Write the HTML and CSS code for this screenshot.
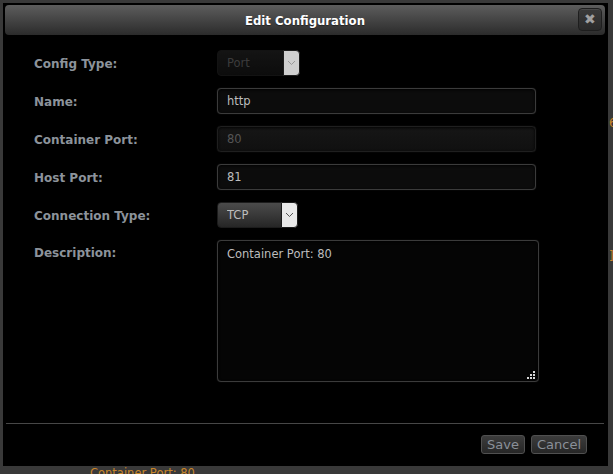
FILE: index.html
```html
<!DOCTYPE html>
<html>
	<head>
		<title>Edit Configuration</title>
		<link rel="stylesheet" href="styles.css">
	</head>
	<body>
		<section class="backdrop">
			<div class="bgEdge bgEdgeTop">6</div>
			<div class="bgEdge bgEdgeMid">]</div>
			<div class="bgLine">Container Port: 80</div>
		</section>

		<section class="modal">
			<header class="titleBar">
				<h2>Edit Configuration</h2>
				<button class="closeButton" type="button">&#10006;</button>
			</header>

			<form class="configForm">
				<label for="configType">Config Type:</label>
				<div class="selectBox disabled narrowA">
					<select id="configType" disabled>
						<option>Port</option>
					</select>
					<span class="arrow"><svg width="9" height="6" viewBox="0 0 9 6"><path d="M1 1 L4.5 4.5 L8 1" fill="none" stroke="currentColor" stroke-width="1"/></svg></span>
				</div>

				<label for="configName">Name:</label>
				<input type="text" id="configName" class="field" value="http" autofocus>

				<label for="containerPort">Container Port:</label>
				<input type="text" id="containerPort" class="field" value="80" disabled>

				<label for="hostPort">Host Port:</label>
				<input type="text" id="hostPort" class="field" value="81">

				<label for="connectionType">Connection Type:</label>
				<div class="selectBox narrowB">
					<select id="connectionType">
						<option>TCP</option>
						<option>UDP</option>
					</select>
					<span class="arrow"><svg width="9" height="6" viewBox="0 0 9 6"><path d="M1 1 L4.5 4.5 L8 1" fill="none" stroke="currentColor" stroke-width="1"/></svg></span>
				</div>

				<label for="description" class="topLabel">Description:</label>
				<div class="areaWrap">
					<textarea id="description">Container Port: 80</textarea>
					<svg class="grip" width="8" height="8" viewBox="0 0 8 8">
						<rect x="6" y="0" width="2" height="2"/>
						<rect x="3" y="3" width="2" height="2"/>
						<rect x="6" y="3" width="2" height="2"/>
						<rect x="0" y="6" width="2" height="2"/>
						<rect x="3" y="6" width="2" height="2"/>
						<rect x="6" y="6" width="2" height="2"/>
					</svg>
				</div>
			</form>

			<footer class="actions">
				<button type="button" class="smallButton">Save</button>
				<button type="button" class="smallButton">Cancel</button>
			</footer>
		</section>
	</body>
</html>
```

FILE: styles.css
```css
html, body {
	height: 100%;
}

body {
	margin: 0px;
	padding: 0px;
	background-color: #393939;
	font-family: "DejaVu Sans", Verdana, sans-serif;
	overflow: hidden;
}

.backdrop {
	display: flex;
	flex-direction: column;
	color: #c8862a;
	font-size: 11.5px;
}

.bgEdge {
	padding-left: 609px;
	line-height: 12px;
}

.bgEdgeTop {
	padding-top: 117px;
}

.bgEdgeMid {
	padding-top: 121px;
}

.bgLine {
	padding-top: 205px;
	padding-left: 90px;
	line-height: 12px;
}

.modal {
	position: absolute;
	left: 3px;
	top: 3px;
	width: 605px;
	height: 463px;
	box-sizing: border-box;
	padding: 2px 2px 2px 2px;
	background-color: #000;
	display: flex;
	flex-direction: column;
}

.titleBar {
	position: relative;
	height: 30px;
	margin-right: 1px;
	border-radius: 4px;
	background: linear-gradient(#5d5d5d, #2b2b2b);
	display: flex;
	align-items: center;
	justify-content: center;
	flex-shrink: 0;
}

.titleBar h2 {
	margin: 0px;
	color: #fff;
	font-family: "DejaVu Sans Condensed", "DejaVu Sans", sans-serif;
	font-weight: bold;
	font-size: 13px;
	text-shadow: 0 1px 1px rgba(0,0,0,0.4);
}

.closeButton {
	position: absolute;
	right: 3px;
	top: 3px;
	width: 24px;
	height: 23px;
	padding: 0px;
	border: 1px solid #1e1e1e;
	border-radius: 4px;
	background: linear-gradient(#3a3a3a, #2a2a2a);
	box-shadow: inset 0 1px 0 rgba(255,255,255,0.08);
	color: #a0a0a0;
	font-size: 14px;
	line-height: 21px;
	text-align: center;
}

.configForm {
	flex: 1;
	display: grid;
	grid-template-columns: 183px auto;
	grid-auto-rows: 26px;
	row-gap: 12px;
	align-items: center;
	justify-items: start;
	padding: 15px 0px 0px 29px;
	margin: 0px;
}

.configForm label {
	color: #8c939b;
	font-weight: bold;
	font-size: 12px;
	padding-top: 2px;
}

.configForm label.topLabel {
	align-self: start;
	padding-top: 6px;
}

.field {
	box-sizing: border-box;
	width: 319px;
	height: 26px;
	padding: 0px 9px;
	border: 1px solid #3b3b3b;
	border-radius: 4px;
	background-color: #0c0c0c;
	box-shadow: inset 0 1px 3px rgba(0,0,0,0.9), 0 0 1px rgba(90,90,90,0.5);
	color: #bdbdbd;
	caret-color: #e0e0e0;
	font-family: "DejaVu Sans", Verdana, sans-serif;
	font-size: 11.5px;
	outline: none;
}

.field:disabled {
	background: linear-gradient(#161616, #101010);
	border-color: #1f1f1f;
	color: #555;
}

.selectBox {
	position: relative;
	height: 26px;
}

.selectBox.narrowA {
	width: 83px;
}

.selectBox.narrowB {
	width: 81px;
}

.selectBox select {
	-webkit-appearance: none;
	appearance: none;
	box-sizing: border-box;
	width: 100%;
	height: 26px;
	padding: 0px 0px 0px 9px;
	border: 1px solid #1c1c1c;
	border-radius: 4px;
	background: linear-gradient(#4b4b4b, #262626);
	color: #bdbdbd;
	font-family: "DejaVu Sans", Verdana, sans-serif;
	font-size: 11.5px;
	outline: none;
}

.selectBox.disabled select {
	background: linear-gradient(#1d1d1d, #121212);
	color: #555;
}

.selectBox .arrow {
	position: absolute;
	right: 0px;
	top: 0px;
	width: 17px;
	height: 26px;
	box-sizing: border-box;
	border: 1px solid #1c1c1c;
	border-radius: 0px 4px 4px 0px;
	background-color: #e9e9e9;
	color: #555;
	display: flex;
	align-items: center;
	justify-content: center;
	pointer-events: none;
}

.selectBox.disabled .arrow {
	background-color: #cfcfcf;
	color: #999;
}

.areaWrap {
	position: relative;
	width: 322px;
	height: 142px;
	align-self: start;
	grid-row: span 4;
}

.areaWrap textarea {
	box-sizing: border-box;
	width: 322px;
	height: 142px;
	padding: 6px 9px;
	border: 1px solid #3b3b3b;
	border-radius: 4px;
	background-color: #050505;
	box-shadow: inset 0 1px 3px rgba(0,0,0,0.9), 0 0 1px rgba(90,90,90,0.5);
	color: #bdbdbd;
	font-family: "DejaVu Sans", Verdana, sans-serif;
	font-size: 11.5px;
	resize: none;
	outline: none;
}

.grip {
	position: absolute;
	right: 4px;
	bottom: 3px;
	fill: #d8d8d8;
}

.actions {
	flex-shrink: 0;
	height: 41px;
	margin: 0px 2px 0px 1px;
	border-top: 1px solid #474747;
	display: flex;
	justify-content: flex-end;
	align-items: flex-start;
	gap: 6px;
	padding: 11px 17px 0px 0px;
	box-sizing: border-box;
}

.smallButton {
	height: 19px;
	padding: 0px 5px;
	border: 1px solid #505050;
	border-radius: 3px;
	background: linear-gradient(#3c3c3c, #262626);
	color: #8a9099;
	font-family: "DejaVu Sans", Verdana, sans-serif;
	font-size: 13px;
	line-height: 17px;
}
```
